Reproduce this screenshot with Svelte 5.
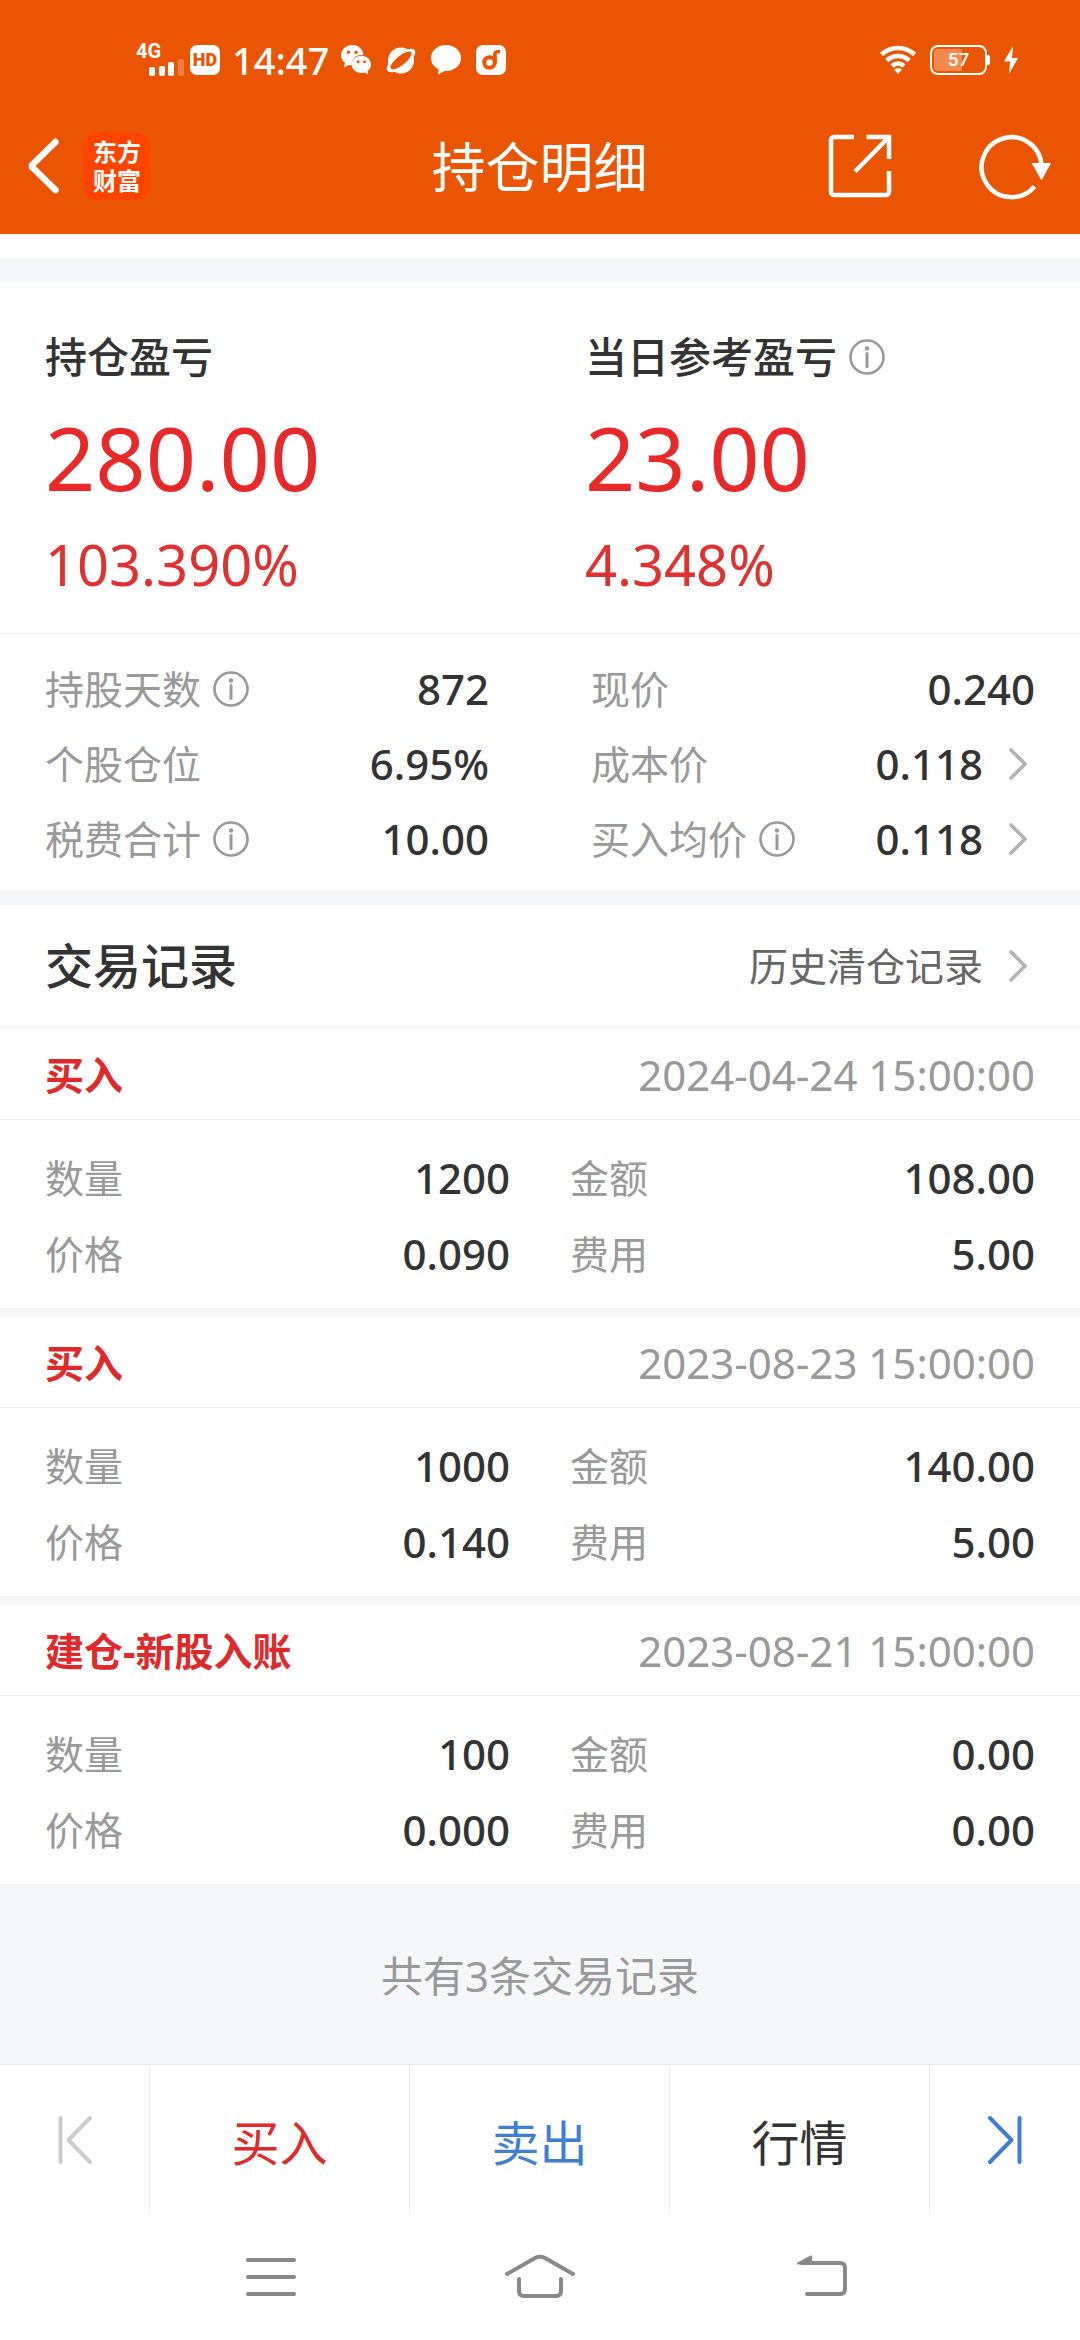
<script lang="ts">
    type Stat = { label: string; value: string; info?: boolean; link?: boolean };
    type Trade = { type: string; time: string; amount: string; total: string; price: string; fee: string };

    const stats: Array<Stat> = [
        { label: '持股天数', value: '872', info: true },
        { label: '现价', value: '0.240' },
        { label: '个股仓位', value: '6.95%' },
        { label: '成本价', value: '0.118', link: true },
        { label: '税费合计', value: '10.00', info: true },
        { label: '买入均价', value: '0.118', info: true, link: true },
    ];

    const trades: Array<Trade> = [
        { type: '买入', time: '2024-04-24 15:00:00', amount: '1200', total: '108.00', price: '0.090', fee: '5.00' },
        { type: '买入', time: '2023-08-23 15:00:00', amount: '1000', total: '140.00', price: '0.140', fee: '5.00' },
        { type: '建仓-新股入账', time: '2023-08-21 15:00:00', amount: '100', total: '0.00', price: '0.000', fee: '0.00' },
    ];

    const fields = (t: Trade) => [
        ['数量', t.amount],
        ['金额', t.total],
        ['价格', t.price],
        ['费用', t.fee],
    ];
</script>

{#snippet infoButton(label: string)}
    <button class="info" aria-label={label + '说明'}>
        <svg width="36" height="36" viewBox="0 0 36 36">
            <circle cx="18" cy="18" r="16.5" fill="none" stroke="#999" stroke-width="2.6" />
            <circle cx="18" cy="9.5" r="2.2" fill="#999" />
            <path d="M18 14.5v13" stroke="#999" stroke-width="3" stroke-linecap="round" />
        </svg>
    </button>
{/snippet}

{#snippet chevron()}
    <svg class="chevron" width="18" height="32" viewBox="0 0 18 32" aria-hidden="true">
        <path d="M2 2l14 14L2 30" fill="none" stroke="#b2b2b2" stroke-width="3.6" stroke-linecap="round" stroke-linejoin="round" />
    </svg>
{/snippet}

<div class="page">
    <header>
        <div class="status">
            <div class="status-side">
                <div class="signal">
                    <span>4G</span>
                    <svg width="36" height="18" viewBox="0 0 36 18">
                        <g fill="#fff">
                            <rect x="1" y="9" width="6" height="9" rx="2" />
                            <rect x="11" y="8" width="6" height="10" rx="2" />
                            <rect x="20" y="4" width="6" height="14" rx="2" />
                            <rect x="30" y="1" width="6" height="17" rx="2" opacity=".25" />
                        </g>
                    </svg>
                </div>
                <span class="hd">HD</span>
                <time>14:47</time>
                <div class="apps">
                    <!-- wechat -->
                    <svg width="30" height="30" viewBox="0 0 30 30">
                        <path d="M11.500 0C5 0 0 4.500 0 10.300c0 3.200 1.500 5.800 4 7.700l-1 4.500 4.600-2.600c1 .3 2 .4 3.200.4C10 14.500 14 9.600 22.500 9.700 21.800 4.200 17.200 0 11.500 0z" fill="#fff" />
                        <path d="M20.300 10.700c-5.400 0-9.700 3.800-9.700 8.600s4.300 8.700 9.700 8.700c1.200 0 2.400-.2 3.400-.5l3.300 1.900-.5-3.200c2.200-1.600 3.500-4 3.500-6.900 0-4.800-4.300-8.600-9.700-8.600z" fill="#fff" />
                        <g fill="#ea5504">
                            <circle cx="7.500" cy="7.300" r="1.700" />
                            <circle cx="15" cy="7.300" r="1.700" />
                            <circle cx="17" cy="16.800" r="1.500" />
                            <circle cx="23.500" cy="16.800" r="1.500" />
                        </g>
                    </svg>
                    <!-- browser planet -->
                    <svg width="30" height="30" viewBox="0 0 30 30">
                        <circle cx="15" cy="15.500" r="13" fill="#fff" />
                        <ellipse cx="15" cy="15.500" rx="17" ry="7" transform="rotate(-37 15 15.500)" fill="#fff" />
                        <ellipse cx="15" cy="15.500" rx="13" ry="4.600" transform="rotate(-39 15 15.500)" fill="#ea5504" />
                    </svg>
                    <!-- message -->
                    <svg width="30" height="30" viewBox="0 0 30 30">
                        <path d="M15 0C6.500 0 0 5.600 0 13c0 5 2.800 9 7.500 11.200L7 29.500l6.500-3.600 1.500.1c8.500 0 15-5.600 15-13S23.500 0 15 0z" fill="#fff" />
                    </svg>
                    <!-- music -->
                    <svg width="30" height="30" viewBox="0 0 30 30">
                        <rect width="30" height="30" rx="7" fill="#fff" />
                        <circle cx="13.500" cy="17.500" r="5.300" fill="none" stroke="#ea5504" stroke-width="4" />
                        <path d="M19 18V8.500c0-1.500 1.500-2 5-2" fill="none" stroke="#ea5504" stroke-width="3.600" />
                    </svg>
                </div>
            </div>
            <div class="status-side right">
                <svg width="36" height="28" viewBox="0 0 36 28">
                    <g fill="none" stroke="#fff" stroke-width="4.600">
                        <path d="M1.500 8.500C11-.2 25-.2 34.500 8.500" />
                        <path d="M6.800 14.500c6.500-6 16-6 22.400 0" />
                        <path d="M12 20c3.500-3.200 8.500-3.200 12 0" />
                    </g>
                    <path d="M14 23.500c2.500-1.800 5.500-1.800 8 0L18 28z" fill="#fff" />
                </svg>
                <div class="battery"><span>57</span></div>
                <svg width="14" height="28" viewBox="0 0 14 28">
                    <path d="M9 0L0 15.500h6L5 28l9-16H8z" fill="#fff" />
                </svg>
            </div>
        </div>
        <div class="bar">
            <div class="bar-side">
                <button class="back" aria-label="返回">
                    <svg width="32" height="56" viewBox="0 0 32 56">
                        <path d="M28.500 4L4 28l24.500 24" fill="none" stroke="#fff" stroke-width="6.500" stroke-linecap="round" stroke-linejoin="bevel" />
                    </svg>
                </button>
                <a class="logo" href="#home">
                    <span>东方</span>
                    <span>财富</span>
                </a>
            </div>
            <h1>持仓明细</h1>
            <div class="bar-side right">
                <button aria-label="分享">
                    <svg width="64" height="64" viewBox="0 0 64 64">
                        <g fill="none" stroke="#fff" stroke-width="4.500">
                            <path d="M26 3H6a3 3 0 0 0-3 3v52a3 3 0 0 0 3 3h52a3 3 0 0 0 3-3V37" />
                            <path d="M38.500 3H61v22M61 3L27 37.500" />
                        </g>
                    </svg>
                </button>
                <button aria-label="刷新">
                    <svg width="72" height="66" viewBox="0 0 72 66">
                        <path d="M54.500 53.500A30 30 0 1 1 61.500 32" fill="none" stroke="#fff" stroke-width="4.500" />
                        <path d="M51.500 30H71L61.500 47.500z" fill="#fff" />
                    </svg>
                </button>
            </div>
        </div>
    </header>

    <main>
        <section class="summary">
            <div>
                <h2>持仓盈亏</h2>
                <p class="profit">280.00</p>
                <p class="rate">103.390%</p>
            </div>
            <div>
                <h2>当日参考盈亏 {@render infoButton('当日参考盈亏')}</h2>
                <p class="profit">23.00</p>
                <p class="rate">4.348%</p>
            </div>
        </section>

        <dl class="stats">
            {#each stats as stat}
                <div class="field">
                    <dt>
                        {stat.label}
                        {#if stat.info}
                            {@render infoButton(stat.label)}
                        {/if}
                    </dt>
                    <dd>
                        {stat.value}
                        {#if stat.link}
                            {@render chevron()}
                        {/if}
                    </dd>
                </div>
            {/each}
        </dl>

        <section class="records">
            <div class="records-title">
                <h2>交易记录</h2>
                <a href="#history">历史清仓记录 {@render chevron()}</a>
            </div>
            {#each trades as trade}
                <article>
                    <div class="trade-head">
                        <h3>{trade.type}</h3>
                        <time>{trade.time}</time>
                    </div>
                    <dl>
                        {#each fields(trade) as [label, value]}
                            <div class="field">
                                <dt>{label}</dt>
                                <dd>{value}</dd>
                            </div>
                        {/each}
                    </dl>
                </article>
            {/each}
        </section>

        <p class="total">共有{trades.length}条交易记录</p>
    </main>

    <div class="actions">
        <button class="step" aria-label="上一个" disabled>
            <svg width="34" height="48" viewBox="0 0 34 48">
                <path d="M2.500 2v44M32 2L10.500 24 32 46" fill="none" stroke="#ccc" stroke-width="4" stroke-linecap="round" stroke-linejoin="round" />
            </svg>
        </button>
        <button class="buy">买入</button>
        <button class="sell">卖出</button>
        <button>行情</button>
        <button class="step" aria-label="下一个">
            <svg width="34" height="48" viewBox="0 0 34 48">
                <path d="M31.500 2v44M2 2L23.500 24 2 46" fill="none" stroke="#3d80d2" stroke-width="4" stroke-linecap="round" stroke-linejoin="round" />
            </svg>
        </button>
    </div>

    <nav>
        <button aria-label="最近任务">
            <svg width="72" height="44" viewBox="0 0 72 44">
                <path d="M20 5h46M20 22h46M20 39h46" stroke="#888" stroke-width="4" stroke-linecap="round" />
            </svg>
        </button>
        <button aria-label="主屏幕">
            <svg width="72" height="44" viewBox="0 0 72 44">
                <path d="M3 19L31 3q5-2.500 10 0l28 16M15 24v12q0 5 5 5h32q5 0 5-5V24" fill="none" stroke="#888" stroke-width="4" stroke-linecap="round" />
            </svg>
        </button>
        <button aria-label="返回上一页">
            <svg width="72" height="44" viewBox="0 0 72 44">
                <path d="M22 8h38q5 0 5 5v21q0 5-5 5H27" fill="none" stroke="#888" stroke-width="4" stroke-linecap="round" />
                <path d="M18 8.500L31 1.500v7z" fill="#888" stroke="#888" stroke-width="2" stroke-linejoin="round" />
            </svg>
        </button>
    </nav>
</div>

<style>
    :global(body) {
        margin: 0;
    }

    .page {
        display: flex;
        flex-direction: column;
        min-height: 100vh;
        background: #fff;
        color: #333;
        font-family: "Noto Sans", "Noto Sans CJK SC", sans-serif;
        font-size: 39px;
    }

    h1, h2, h3, p, dl, dd {
        margin: 0;
        font-weight: 400;
    }

    button {
        display: flex;
        align-items: center;
        justify-content: center;
        padding: 0;
        border: none;
        background: none;
        color: inherit;
        font: inherit;
    }

    a {
        color: inherit;
        text-decoration: none;
    }

    svg {
        display: block;
        flex: none;
        overflow: visible;
    }

    header {
        background: #ea5504;
        color: #fff;
    }

    .status {
        display: flex;
        justify-content: space-between;
        align-items: center;
        height: 76px;
        padding: 22px 62px 0 136px;
    }

    .status-side {
        display: flex;
        align-items: center;
    }

    .status-side.right {
        gap: 14px;
    }

    .signal {
        display: flex;
        flex-direction: column;
        width: 48px;
        margin-right: 6px;
    }

    .signal span {
        font-family: Roboto, sans-serif;
        font-size: 20px;
        font-weight: 700;
        line-height: 14px;
    }

    .signal svg {
        align-self: flex-end;
    }

    .hd {
        width: 30px;
        border-radius: 7px;
        background: #fff;
        color: #ea5504;
        font-family: Roboto, sans-serif;
        font-size: 18px;
        font-weight: 900;
        line-height: 30px;
        text-align: center;
    }

    .status time {
        margin: 0 12px;
        font-size: 38px;
        font-weight: 500;
        line-height: 40px;
    }

    .apps {
        display: flex;
        gap: 15px;
    }

    .battery {
        position: relative;
        box-sizing: border-box;
        width: 57px;
        height: 30px;
        margin-right: 3px;
        border: 2px solid #fff;
        border-radius: 8px;
        background: linear-gradient(90deg, #f28a50 57%, transparent 57%) content-box;
        padding: 2px;
        font-family: Roboto, sans-serif;
        font-size: 19px;
        font-weight: 500;
        line-height: 22px;
        text-align: center;
    }

    .battery::after {
        content: "";
        position: absolute;
        top: 8px;
        right: -5px;
        width: 3px;
        height: 10px;
        border-radius: 0 2px 2px 0;
        background: #fff;
    }

    .bar {
        display: grid;
        grid-template-columns: 1fr auto 1fr;
        align-items: center;
        height: 136px;
        padding: 0 28px 0 27px;
    }

    .bar-side {
        display: flex;
        align-items: center;
        gap: 24px;
    }

    .bar-side.right {
        justify-content: flex-end;
        gap: 88px;
    }

    .logo {
        display: flex;
        flex-direction: column;
        padding: 5px 9px 5px 10px;
        border-radius: 14px;
        background: #ff4400;
        font-size: 24px;
        font-weight: 700;
        line-height: 29px;
    }

    h1 {
        padding-top: 2px;
        font-size: 54px;
        line-height: 64px;
    }

    main {
        display: flex;
        flex: 1;
        flex-direction: column;
        padding-top: 24px;
    }

    .summary {
        display: grid;
        grid-template-columns: 1fr 1fr;
        padding: 47px 0 34px;
        border-top: 24px solid #f6f7f9;
        border-bottom: 1px solid #f0f1f3;
    }

    .summary > div {
        padding-left: 45px;
    }

    .summary h2 {
        display: flex;
        align-items: center;
        gap: 12px;
        font-size: 42px;
        font-weight: 500;
        line-height: 56px;
    }

    .profit {
        color: #e92828;
        font-size: 88px;
        line-height: 144px;
    }

    .rate {
        color: #e03030;
        font-size: 56px;
        line-height: 70px;
    }

    .stats {
        display: grid;
        grid-template-columns: 1fr 1fr;
        column-gap: 102px;
        padding: 17px 45px 14px;
        border-bottom: 15px solid #f6f7f9;
    }

    .field {
        display: flex;
        justify-content: space-between;
        line-height: 75px;
    }

    dt, dd {
        display: flex;
        align-items: center;
        gap: 12px;
    }

    dt {
        color: #999;
    }

    dd {
        font-size: 42px;
        font-weight: 500;
    }

    .chevron {
        margin: 0 8px 0 14px;
    }

    .records-title {
        display: flex;
        justify-content: space-between;
        align-items: center;
        padding: 2px 45px 0;
        border-bottom: 4px solid #f6f7f9;
        line-height: 118px;
    }

    .records-title h2 {
        font-size: 48px;
        font-weight: 500;
    }

    .records-title a {
        display: flex;
        align-items: center;
        gap: 12px;
        color: #666;
    }

    article + article {
        border-top: 9px solid #f6f7f9;
    }

    .trade-head {
        display: flex;
        justify-content: space-between;
        padding: 2px 45px 0;
        border-bottom: 1px solid #f0f1f3;
        line-height: 88px;
    }

    h3 {
        color: #e02a2a;
        font-size: 39px;
        font-weight: 700;
    }

    .trade-head time {
        color: #999;
        font-size: 42px;
    }

    article dl {
        display: grid;
        grid-template-columns: 1fr 1fr;
        column-gap: 60px;
        padding: 20px 45px 16px;
    }

    article .field {
        line-height: 76px;
    }

    .total {
        flex: 1;
        padding-top: 4px;
        background: #f6f7f9;
        color: #999;
        font-size: 42px;
        line-height: 176px;
        text-align: center;
    }

    .actions {
        display: flex;
        height: 149px;
        border-top: 1px solid #e9eaec;
        font-size: 48px;
    }

    .actions button {
        flex: 1;
        border-right: 1px solid #ececec;
    }

    .actions .step {
        flex: 0 0 150px;
    }

    .actions button:last-child {
        border-right: none;
    }

    .actions .buy {
        color: #e02a2a;
    }

    .actions .sell {
        color: #3d80d2;
    }

    nav {
        display: grid;
        grid-template-columns: repeat(3, 1fr);
        height: 126px;
        padding: 0 126px;
    }
</style>
